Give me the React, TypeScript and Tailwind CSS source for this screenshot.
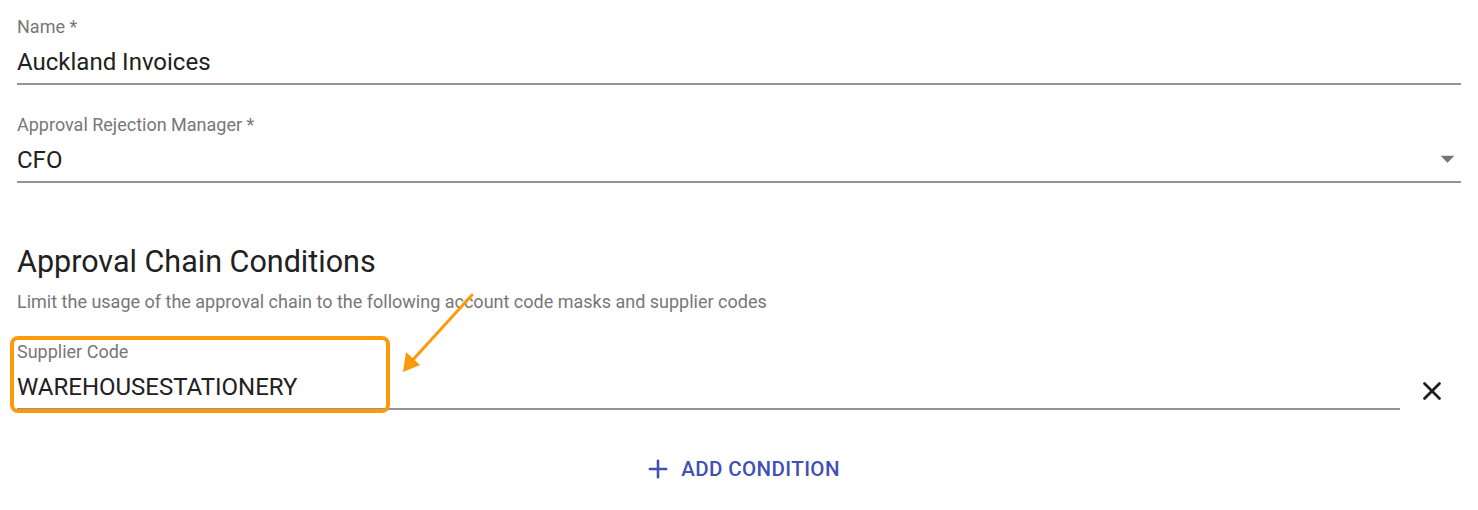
import { X, Plus } from "lucide-react";

function Field({ label, value, dropdown }: { label: string; value: string; dropdown?: boolean }) {
  return (
    <div className="border-b-2 border-[#949494] pb-[7px]">
      <div className="text-[18px] leading-[20px] text-[#777]">{label}</div>
      <div className="mt-[11px] flex h-[28px] items-center justify-between">
        <span className="text-[24px] leading-[28px] text-[#212121]">{value}</span>
        {dropdown && (
          <svg width="33" height="33" viewBox="0 0 24 24" className="-mr-[3px] -mt-[4px]">
            <path d="M7 10l5 5 5-5z" fill="#757575" />
          </svg>
        )}
      </div>
    </div>
  );
}

export default function App() {
  return (
    <div className="relative min-h-[510px] bg-white pl-[17px] pr-[17px] pt-[17px] font-['Roboto',sans-serif]">
      <Field label="Name *" value="Auckland Invoices" />
      <div className="mt-[30px]">
        <Field label="Approval Rejection Manager *" value="CFO" dropdown />
      </div>

      <h2 className="mt-[61px] text-[30.5px] leading-[36px] font-normal text-[#212121]">
        Approval Chain Conditions
      </h2>
      <p className="mt-[12px] text-[18px] leading-[20px] text-[#777]">
        Limit the usage of the approval chain to the following account code masks and supplier codes
      </p>

      <div className="mt-[30px] flex items-end">
        <div className="relative flex-1">
          <Field label="Supplier Code" value="WAREHOUSESTATIONERY" />
          {/* annotation highlight */}
          <div className="pointer-events-none absolute -left-[7px] -top-[6px] h-[77px] w-[380px] rounded-[8px] border-4 border-[#fd9a0b]" />
        </div>
        <div className="flex w-[61px] justify-center pb-[4px]">
          <X size={30} strokeWidth={2.2} color="#1f1f1f" className="translate-x-[1px]" />
        </div>
      </div>

      <div className="mt-[44px] flex justify-center pl-[6px]">
        <button className="flex items-center gap-[9px] text-[20.5px] font-medium uppercase tracking-[0.02em] text-[#3f51b5]">
          <Plus size={28} strokeWidth={2.2} />
          Add Condition
        </button>
      </div>

      {/* annotation arrow */}
      <svg className="pointer-events-none absolute left-0 top-0" width="1478" height="510">
        <line x1="472" y1="295" x2="410" y2="363" stroke="#fd9a0b" strokeWidth="3" strokeLinecap="round" />
        <polygon points="403,372 406,352 420,365" fill="#fd9a0b" />
      </svg>
    </div>
  );
}
